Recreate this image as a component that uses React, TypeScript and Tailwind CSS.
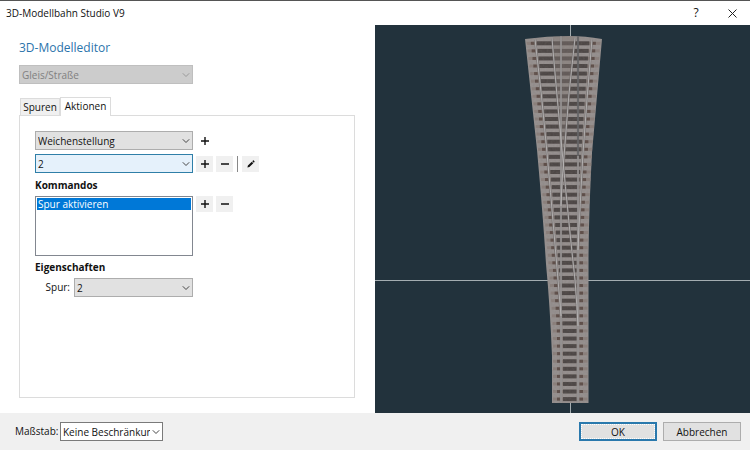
import type { ReactNode, SelectHTMLAttributes } from "react";
import clsx from "clsx";

function Chevron({ className }: { className?: string }) {
  return (
    <svg
      viewBox="0 0 8 5"
      className={clsx("pointer-events-none absolute top-1/2 right-[3px] h-[5px] w-2 -translate-y-1/2", className)}
      fill="none"
      stroke="currentColor"
    >
      <path d="M0.8 0.8 4 4 7.2 0.8" />
    </svg>
  );
}

type DropdownProps = SelectHTMLAttributes<HTMLSelectElement> & {
  options: string[];
  look: string;
  wrapper?: string;
};

function Dropdown({ options, look, wrapper, ...rest }: DropdownProps) {
  return (
    <div className={clsx("relative", wrapper)}>
      <select
        className={clsx("block h-[19px] w-full appearance-none border pr-3 pl-[2px] leading-4 outline-none", look)}
        {...rest}
      >
        {options.map((option) => (
          <option key={option}>{option}</option>
        ))}
      </select>
      <Chevron className={rest.disabled ? "text-[#999]" : "text-[#444]"} />
    </div>
  );
}

function IconButton({ label, plain, children }: { label: string; plain?: boolean; children: ReactNode }) {
  return (
    <button
      type="button"
      aria-label={label}
      className={clsx("flex h-4 w-[17px] items-center justify-center", !plain && "bg-[#f0f0f0]")}
    >
      {children}
    </button>
  );
}

function Plus() {
  return (
    <svg viewBox="0 0 8 8" className="size-2" stroke="#111" strokeWidth="1.4">
      <path d="M4 0V8M0 4H8" />
    </svg>
  );
}

function Minus() {
  return (
    <svg viewBox="0 0 8 8" className="size-2" stroke="#111" strokeWidth="1.5">
      <path d="M0 4H8" />
    </svg>
  );
}

function Pencil() {
  return (
    <svg viewBox="0 0 8 8" className="size-2" fill="#111">
      <path d="M0.4 7.6 0.9 5.6 4.8 1.7 6.3 3.2 2.4 7.1ZM5.3 1.2 6 0.5Q6.4 0.2 6.8 0.6L7.4 1.2Q7.8 1.6 7.5 2L6.8 2.7Z" />
    </svg>
  );
}

const BODY = "M0 3 Q22 0 45 0 Q60 0 77 3 Q72 60 67 117 Q64 170 63.5 220 V367 H27 V320 Q25 270 21 228 Q18 180 12 114 Z";

// Sleeper rows, top to bottom
const ROWS = Array.from({ length: 48 }, (_, i) => 7.3 + i * 7.57);

// Left edge of the left branch and right edge of the right branch at a height
const leftEdge = (y: number) => (y < 300 ? 27 - 27 * Math.pow((300 - y) / 300, 1.25) : 27);
const rightEdge = (y: number) => (y < 220 ? 63.5 + 13.5 * Math.pow((220 - y) / 220, 1.4) : 63.5);

const RAILS = [
  "M10 3 Q17 60 22 117 Q29 195 36 280",
  "M27 2 Q31 50 37 114 Q44 190 50 244 Q52 270 53 290",
  "M50 2 Q43 60 39.5 114 Q37 140 36 170",
  "M67 3 Q62 60 58 117 Q55 170 53 214",
];

function Track() {
  return (
    <svg viewBox="0 0 77 368" className="absolute top-[11px] left-[150px] h-[368px] w-[77px]">
      <defs>
        <clipPath id="track-body">
          <path d={BODY} />
        </clipPath>
        <filter id="gravel" x="0" y="0" width="100%" height="100%">
          <feTurbulence type="fractalNoise" baseFrequency="0.5" numOctaves="2" seed="4" />
          <feColorMatrix values="0 0 0 0 0.2  0 0 0 0 0.18  0 0 0 0 0.17  0.8 0 0 0 -0.25" />
        </filter>
      </defs>
      <g clipPath="url(#track-body)">
        <rect width="77" height="368" fill="#979190" />
        {ROWS.map((y) => {
          const left = leftEdge(y);
          const right = rightEdge(y);
          return (
            <g key={y}>
              <rect x={left + 1} y={y - 1.5} width={right - left - 2} height="3" fill="#8c817d" />
              <rect x={left + 11} y={y - 2} width={right - left - 23} height="4" fill="#4d4746" />
              <rect x={left + 5} y={y - 1.5} width="3.5" height="3" fill="#5e4e49" />
              <rect x={right - 9} y={y - 1.5} width="3.5" height="3" fill="#5e4e49" />
            </g>
          );
        })}
        {/* Gravel where the branches overlap */}
        <path d="M28 0H49L41 115 37 160 35 115Z" fill="#857a76" opacity="0.4" />
        <rect width="77" height="368" filter="url(#gravel)" opacity="0.5" />
        <g fill="none" stroke="#6f6a69" strokeWidth="2.2" opacity="0.8">
          <path d="M36 0V368M53 0V368" />
          {RAILS.map((d) => (
            <path key={d} d={d} />
          ))}
        </g>
        <g fill="none" stroke="#b8b6b6" strokeWidth="0.9">
          <path d="M36 0V368M53 120V368" />
          {RAILS.map((d) => (
            <path key={d} d={d} />
          ))}
          <path d="M53 0V120" stroke="#5b6064" />
        </g>
      </g>
    </svg>
  );
}

function Preview() {
  return (
    <section aria-label="Vorschau" className="relative flex-1 overflow-hidden bg-[#22323c]">
      <div className="absolute inset-y-0 left-[195px] w-px bg-[#a4adb1]" />
      <div className="absolute inset-x-0 top-[255px] h-px bg-[#a4adb1]" />
      <Track />
    </section>
  );
}

function ActionsPanel() {
  return (
    <div className="flex flex-1 flex-col border border-[#dcdcdc] px-[15px] pt-[15px]">
      <div className="flex items-center gap-[3px]">
        <Dropdown
          aria-label="Aktion"
          options={["Weichenstellung"]}
          wrapper="w-[158px]"
          look="border-[#adadad] bg-[#e1e1e1]"
        />
        <IconButton label="Aktion hinzufügen" plain>
          <Plus />
        </IconButton>
      </div>
      <div className="mt-1 flex items-center gap-[3px]">
        <Dropdown
          aria-label="Stellung"
          options={["2", "1"]}
          wrapper="w-[158px]"
          look="border-[#2f7fa8] bg-[#e5f1fb]"
        />
        <IconButton label="Stellung hinzufügen">
          <Plus />
        </IconButton>
        <IconButton label="Stellung entfernen">
          <Minus />
        </IconButton>
        <div className="mx-px h-4 w-px bg-[#888]" />
        <IconButton label="Umbenennen">
          <Pencil />
        </IconButton>
      </div>

      <h2 className="mt-1 leading-4 font-bold">Kommandos</h2>
      <div className="mt-[3px] flex items-start gap-[3px]">
        <ul role="listbox" aria-label="Kommandos" className="h-[60px] w-[158px] border border-[#828790] p-px">
          <li role="option" aria-selected="true" className="h-3 bg-[#0078d7] pl-px leading-3 text-white">
            Spur aktivieren
          </li>
        </ul>
        <IconButton label="Kommando hinzufügen">
          <Plus />
        </IconButton>
        <IconButton label="Kommando entfernen">
          <Minus />
        </IconButton>
      </div>

      <h2 className="mt-[3px] leading-4 font-bold">Eigenschaften</h2>
      <div className="mt-[3px] flex w-[158px] items-center">
        <label htmlFor="spur" className="w-[39px] pr-1 text-right">
          Spur:
        </label>
        <Dropdown id="spur" options={["2", "1"]} wrapper="flex-1" look="border-[#adadad] bg-[#e1e1e1]" />
      </div>
    </div>
  );
}

export default function App() {
  return (
    <div className="flex min-h-screen flex-col bg-white font-['Open_Sans','Noto_Sans',sans-serif] text-[10px] text-[#111]">
      <header className="flex h-[25px] items-center border-t border-[#555] pl-[6px]">
        <h1 className="flex-1">3D-Modellbahn Studio V9</h1>
        <button type="button" aria-label="Hilfe" className="flex h-full w-9 items-center justify-center text-xs">
          ?
        </button>
        <button type="button" aria-label="Schließen" className="flex h-full w-9 items-center justify-center">
          <svg viewBox="0 0 9 9" className="size-[9px]" stroke="#222">
            <path d="M0.5 0.5 8.5 8.5M8.5 0.5 0.5 8.5" />
          </svg>
        </button>
      </header>

      <main className="flex flex-1">
        <section className="flex w-1/2 flex-col pt-[15px] pr-5 pb-[15px] pl-[19px]">
          <h2 className="text-xs leading-4 text-[#2b74ab]">3D-Modelleditor</h2>
          <Dropdown
            aria-label="Objekttyp"
            options={["Gleis/Straße"]}
            disabled
            wrapper="mt-[9px] w-[174px]"
            look="border-[#bfbfbf] bg-[#ccc] text-[#808080] opacity-100"
          />
          <div role="tablist" className="relative z-10 mt-[13px] -mb-px flex items-end pl-px">
            <button
              type="button"
              role="tab"
              aria-selected="false"
              className="mb-px h-[17px] w-10 border border-b-0 border-[#dcdcdc] bg-[#f0f0f0]"
            >
              Spuren
            </button>
            <button
              type="button"
              role="tab"
              aria-selected="true"
              className="h-[19px] w-[51px] border border-b-0 border-[#dcdcdc] bg-white pb-[2px]"
            >
              Aktionen
            </button>
          </div>
          <ActionsPanel />
        </section>
        <Preview />
      </main>

      <footer className="flex h-[37px] items-center bg-[#f0f0f0] pr-[9px] pl-[15px]">
        <label htmlFor="massstab" className="w-[45px]">
          Maßstab:
        </label>
        <Dropdown
          id="massstab"
          options={["Keine Beschränkung"]}
          wrapper="w-[103px]"
          look="border-[#7a7a7a] bg-white"
        />
        <button
          type="button"
          className="ml-auto h-[19px] w-[78px] border-2 border-[#2a79ad] bg-[#e1e1e1] leading-3 outline outline-dotted -outline-offset-3 outline-white"
        >
          OK
        </button>
        <button type="button" className="ml-[6px] h-[19px] w-[78px] border border-[#adadad] bg-[#e1e1e1] leading-3">
          Abbrechen
        </button>
      </footer>
    </div>
  );
}
